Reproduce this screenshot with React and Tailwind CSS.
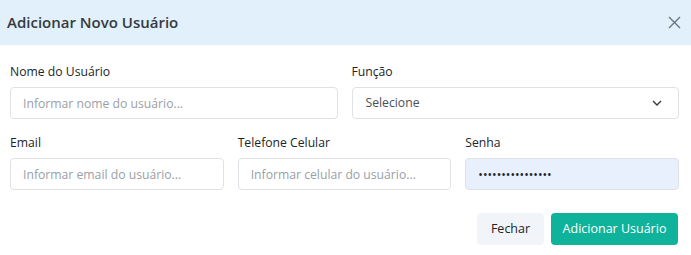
import { useState } from "react";

const font = { fontFamily: "'Open Sans', 'Noto Sans', sans-serif" };

function Label({ children }) {
  return (
    <label className="block text-[12.2px] leading-5 font-medium text-[#212529] mb-[5px]">
      {children}
    </label>
  );
}

function TextInput({ placeholder, type = "text", value, onChange, autofill }) {
  return (
    <input
      type={type}
      placeholder={placeholder}
      value={value}
      onChange={onChange}
      className={`block w-full h-8 rounded-[4px] border border-[#dee2e6] px-3 text-[12.2px] text-[#212529] placeholder:text-[#9aa0a8] outline-none ${
        autofill ? "bg-[#e8f0fe]" : "bg-white"
      }`}
    />
  );
}

export default function App() {
  const [senha, setSenha] = useState("••••••••••••••••");
  const [role, setRole] = useState("");

  return (
    <div className="w-[691px] h-[255px] bg-white" style={font}>
      <div className="flex items-center justify-between h-[45px] bg-[#e1f0fa] pl-[7px] pr-[9px]">
        <h2 className="text-[15px] font-semibold text-[#343a40]">
          Adicionar Novo Usuário
        </h2>
        <button className="w-4 h-4 flex items-center justify-center text-[#6c757d]">
          <svg width="13" height="13" viewBox="0 0 13 13" fill="none" stroke="currentColor" strokeWidth="1.4">
            <path d="M1 1L12 12M12 1L1 12" />
          </svg>
        </button>
      </div>

      <div className="pt-[17px] pl-[10px] pr-[12px]">
        <div className="grid grid-cols-2 gap-x-[14px]">
          <div>
            <Label>Nome do Usuário</Label>
            <TextInput placeholder="Informar nome do usuário..." />
          </div>
          <div>
            <Label>Função</Label>
            <div className="relative">
              <select
                value={role}
                onChange={(e) => setRole(e.target.value)}
                className="block w-full h-8 appearance-none rounded-[4px] border border-[#dee2e6] bg-white pl-[13px] pr-8 text-[12.2px] text-[#495057] outline-none"
              >
                <option value="">Selecione</option>
                <option value="admin">Administrador</option>
                <option value="user">Usuário</option>
              </select>
              <svg
                className="absolute right-[17px] top-[13px] pointer-events-none text-[#343a40]"
                width="10"
                height="6"
                viewBox="0 0 10 6"
                fill="none"
                stroke="currentColor"
                strokeWidth="1.4"
              >
                <path d="M1 1L5 5L9 1" />
              </svg>
            </div>
          </div>
        </div>

        <div className="grid grid-cols-3 gap-x-[14px] mt-[14px]">
          <div>
            <Label>Email</Label>
            <TextInput placeholder="Informar email do usuário..." />
          </div>
          <div>
            <Label>Telefone Celular</Label>
            <TextInput placeholder="Informar celular do usuário..." />
          </div>
          <div>
            <Label>Senha</Label>
            <TextInput
              type="text"
              value={senha}
              onChange={(e) => setSenha(e.target.value)}
              autofill
            />
          </div>
        </div>

        <div className="flex justify-end gap-[7px] mt-[23px] pr-px">
          <button className="h-8 w-[67px] rounded-[4px] bg-[#f1f4f8] text-[12.5px] font-medium text-[#212529]">
            Fechar
          </button>
          <button className="h-8 w-[127px] rounded-[4px] bg-[#0fb29a] text-[12.5px] font-medium text-white">
            Adicionar Usuário
          </button>
        </div>
      </div>
    </div>
  );
}
